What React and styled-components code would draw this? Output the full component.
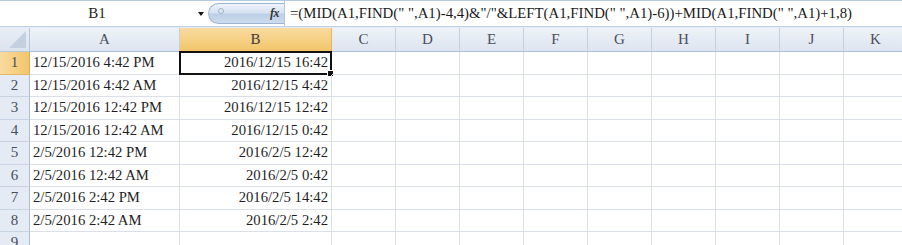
import React from 'react';
import styled, { createGlobalStyle } from 'styled-components';

const GlobalStyle = createGlobalStyle`
  html, body {
    margin: 0;
    padding: 0;
    background: #ffffff;
  }
  body {
    font-family: "Liberation Serif", "Times New Roman", serif;
  }
`;

const Sheet = styled.div`
  width: 902px;
  height: 245px;
  overflow: hidden;
  background: #ffffff;
  font-family: "Liberation Serif", "Times New Roman", serif;
  color: #222;
`;

const FormulaBar = styled.div`
  display: flex;
  align-items: stretch;
  border-top: 1px solid #b7cae3;
  border-bottom: 1px solid #c3d1e4;
  box-sizing: border-box;
  height: 27px;
`;

const NameBox = styled.div`
  width: 194px;
  display: flex;
  align-items: center;
  justify-content: center;
  font-size: 15px;
  color: #222;
`;

const DropArrow = styled.div`
  width: 14px;
  display: flex;
  align-items: center;
  justify-content: center;
  &::after {
    content: '';
    border-left: 3.5px solid transparent;
    border-right: 3.5px solid transparent;
    border-top: 4px solid #111;
  }
`;

const FxPill = styled.div`
  margin: 2px 0;
  width: 76px;
  box-sizing: border-box;
  border: 1px solid #9db4d2;
  border-right: none;
  border-radius: 12px 0 0 12px;
  background: linear-gradient(#edf3fa 0%, #d6e3f2 45%, #bccfe6 55%, #cddcee 100%);
  display: flex;
  align-items: center;
  justify-content: space-between;
  padding: 0 5px 0 9px;
`;

const Grip = styled.span`
  width: 4px;
  height: 4px;
  border-radius: 50%;
  border: 1px solid #a3b3c8;
  margin-top: -6px;
`;

const FxLabel = styled.span`
  font-style: italic;
  font-weight: bold;
  font-size: 12px;
  color: #333;
  letter-spacing: -0.5px;
`;

const FormulaInput = styled.div`
  flex: 1;
  border-left: 1px solid #b8c8dc;
  display: flex;
  align-items: center;
  padding-left: 5px;
  font-size: 14.8px;
  white-space: nowrap;
  color: #1a1a1a;
`;

const Gap = styled.div`
  height: 1px;
  background: #e3ebf5;
`;

const Grid = styled.div`
  display: grid;
  grid-template-columns: 30px 150px 152px repeat(9, 64px);
  grid-template-rows: 24px repeat(9, 22.5px);
`;

const Corner = styled.div`
  background: linear-gradient(#e9eef6, #dbe3ee);
  border-right: 1px solid #b6c6db;
  border-bottom: 1px solid #b6c6db;
  box-sizing: border-box;
  position: relative;
  &::after {
    content: '';
    position: absolute;
    right: 3px;
    bottom: 3px;
    border-left: 17px solid transparent;
    border-bottom: 17px solid #c4d0e0;
  }
`;

const ColHead = styled.div`
  display: flex;
  align-items: center;
  justify-content: center;
  font-size: 15px;
  color: ${p => (p.$active ? '#3a3a3a' : '#4a4f5a')};
  background: ${p =>
    p.$active
      ? 'linear-gradient(#f9dba0, #f2c56a)'
      : 'linear-gradient(#eef2f8, #dde5f0)'};
  border-right: 1px solid ${p => (p.$active ? '#e8b65a' : '#c4d0e1')};
  border-bottom: 1px solid ${p => (p.$active ? '#dca852' : '#aebfd5')};
  box-sizing: border-box;
`;

const RowHead = styled.div`
  display: flex;
  align-items: center;
  justify-content: center;
  font-size: 15px;
  color: #4a4f5a;
  background: ${p =>
    p.$active ? 'linear-gradient(90deg, #f9dba0, #f2c56a)' : '#e4ebf5'};
  border-right: 1px solid ${p => (p.$active ? '#e0b060' : '#aebfd5')};
  border-bottom: 1px solid ${p => (p.$active ? '#e3b866' : '#c8d4e4')};
  box-sizing: border-box;
`;

const Cell = styled.div`
  display: flex;
  align-items: center;
  justify-content: ${p => (p.$right ? 'flex-end' : 'flex-start')};
  padding: 0 3px;
  font-size: 14.7px;
  white-space: nowrap;
  overflow: hidden;
  color: #1e1e1e;
  border-right: 1px solid #dbe0e8;
  border-bottom: 1px solid #dbe0e8;
  box-sizing: border-box;
  position: relative;
  ${p =>
    p.$active &&
    `
    border: 2px solid #111;
    margin: -1px 0 0 -1px;
    padding-right: 2px;
    overflow: visible;
    &::after {
      content: '';
      position: absolute;
      right: -4px;
      bottom: -4px;
      width: 5px;
      height: 5px;
      background: #111;
      border: 1px solid #fff;
    }
  `}
`;

const columns = ['A', 'B', 'C', 'D', 'E', 'F', 'G', 'H', 'I', 'J', 'K'];

const rows = [
  ['12/15/2016 4:42 PM', '2016/12/15 16:42'],
  ['12/15/2016 4:42 AM', '2016/12/15 4:42'],
  ['12/15/2016 12:42 PM', '2016/12/15 12:42'],
  ['12/15/2016 12:42 AM', '2016/12/15 0:42'],
  ['2/5/2016 12:42 PM', '2016/2/5 12:42'],
  ['2/5/2016 12:42 AM', '2016/2/5 0:42'],
  ['2/5/2016 2:42 PM', '2016/2/5 14:42'],
  ['2/5/2016 2:42 AM', '2016/2/5 2:42'],
  ['', ''],
];

const formula =
  '=(MID(A1,FIND(" ",A1)-4,4)&"/"&LEFT(A1,FIND(" ",A1)-6))+MID(A1,FIND(" ",A1)+1,8)';

function App() {
  return (
    <Sheet>
      <GlobalStyle />
      <FormulaBar>
        <NameBox>B1</NameBox>
        <DropArrow />
        <FxPill>
          <Grip />
          <FxLabel>fx</FxLabel>
        </FxPill>
        <FormulaInput>{formula}</FormulaInput>
      </FormulaBar>
      <Gap />
      <Grid>
        <Corner />
        {columns.map(c => (
          <ColHead key={c} $active={c === 'B'}>
            {c}
          </ColHead>
        ))}
        {rows.map((r, i) => (
          <React.Fragment key={i}>
            <RowHead $active={i === 0}>{i + 1}</RowHead>
            <Cell>{r[0]}</Cell>
            <Cell $right $active={i === 0}>
              {r[1]}
            </Cell>
            {columns.slice(2).map(c => (
              <Cell key={c} />
            ))}
          </React.Fragment>
        ))}
      </Grid>
    </Sheet>
  );
}

export default App;
